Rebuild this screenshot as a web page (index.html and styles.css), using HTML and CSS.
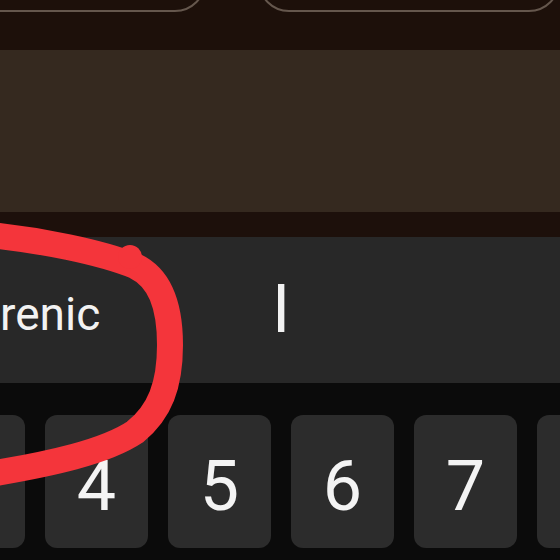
FILE: index.html
```html
<!DOCTYPE html>
<html lang="en">
<head>
    <meta charset="UTF-8">
    <title>Keyboard</title>
    <link rel="stylesheet" href="styles.css">
</head>
<body>
    <div class="screen">
        <div class="top">
            <div class="btns">
                <div class="btn btn-left"></div>
                <div class="btn btn-right"></div>
            </div>
        </div>
        <div class="band"></div>
        <div class="strip"></div>
        <div class="suggest">
            <span class="word">renic</span>
            <span class="word word-i">I</span>
        </div>
        <div class="keys">
            <div class="key"></div>
            <div class="key">4</div>
            <div class="key">5</div>
            <div class="key">6</div>
            <div class="key">7</div>
            <div class="key"></div>
        </div>
        <svg class="mark" width="560" height="560" viewBox="0 0 560 560">
            <path d="M-10 235 C40 240 100 252 135 266 C160 278 170 305 170 345 C170 385 160 412 135 432 C105 452 50 464 -10 474" fill="none" stroke="#f4353b" stroke-width="26" stroke-linecap="round"/>
            <circle cx="130" cy="257" r="12" fill="#f4353b"/>
        </svg>
    </div>
</body>
</html>
```

FILE: styles.css
```css
*{padding: 0;margin: 0;box-sizing: border-box;}
body{background: #0b0b0b;font-family: Roboto, "Noto Sans", sans-serif;}
.screen{width: 560px;height: 560px;position: relative;overflow: hidden;}

.top{height: 50px;background: #1d100a;overflow: hidden;}
.btns{display: flex;margin-top: -50px;height: 62px;}
.btn{height: 62px;border: 2px solid #65574d;border-radius: 46px;}
.btn-left{width: 250px;margin-left: -41px;}
.btn-right{width: 302px;margin-left: 52px;flex: none;}

.band{height: 162px;background: #35291f;}
.strip{height: 25px;background: #1d100b;}

.suggest{height: 146px;background: #282828;display: flex;align-items: center;color: #f2f2f2;}
.word{font-size: 46px;line-height: 1;padding-top: 8px;width: 272px;}
.word-i{font-size: 67px;width: auto;padding-top: 0;padding-bottom: 2px;}

.keys{display: flex;gap: 20px;margin-left: -78px;padding-top: 32px;}
.key{flex: none;width: 103px;height: 133px;background: #2c2c2c;border-radius: 12px;
     display: flex;align-items: center;justify-content: center;
     color: #f4f4f4;font-size: 70px;padding-top: 8px;}

.mark{position: absolute;left: 0;top: 0;}
```
